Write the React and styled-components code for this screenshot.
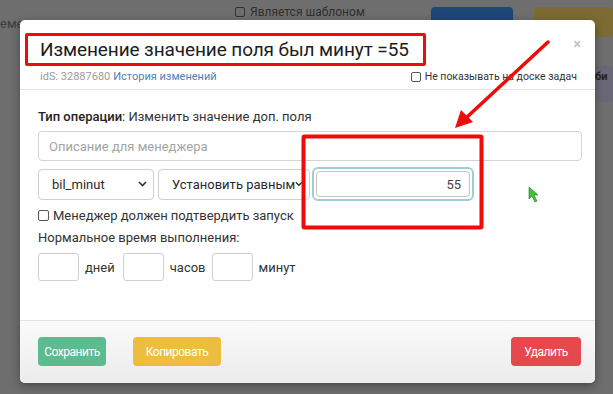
import React from 'react';
import styled, { createGlobalStyle } from 'styled-components';

const Global = createGlobalStyle`
  *, *::before, *::after { box-sizing: border-box; }
  html, body { margin: 0; padding: 0; }
  body {
    width: 613px;
    height: 394px;
    overflow: hidden;
    font-family: Roboto, "Noto Sans", sans-serif;
    background: #6c6c6c;
  }
`;

const Page = styled.div`
  position: relative;
  width: 613px;
  height: 394px;
  background: #6e6e6e;
  overflow: hidden;
`;

const TopBar = styled.div`
  display: flex;
  align-items: flex-start;
  height: 40px;
  color: #3a3a3a;
  font-size: 13px;
  white-space: nowrap;
`;

const BgText = styled.div`
  margin-top: 16px;
  width: 60px;
  color: #3c3c3c;
`;

const BgCheck = styled.label`
  display: flex;
  align-items: center;
  gap: 5px;
  margin: 5px 0 0 176px;
  color: #2e2e2e;
  font-size: 12px;
`;

const BgBox = styled.span`
  width: 10px;
  height: 10px;
  border: 1px solid #333;
  border-radius: 2px;
`;

const BgButton = styled.div`
  width: ${p => p.$w}px;
  height: 30px;
  margin: 7px 0 0 ${p => p.$ml}px;
  border-radius: 4px;
  background: ${p => p.$c};
`;

const SidePanel = styled.div`
  position: absolute;
  right: 0;
  top: 66px;
  width: 18px;
  height: 36px;
  background: #6a6876;
  color: #222;
  font-size: 11px;
  font-weight: 700;
  padding-top: 4px;
  overflow: hidden;
  white-space: nowrap;
`;

const Modal = styled.div`
  position: absolute;
  left: 20px;
  top: 20px;
  width: 575px;
  height: 363px;
  background: #fff;
  border-radius: 5px;
  box-shadow: 0 3px 10px rgba(0, 0, 0, 0.35);
  display: flex;
  flex-direction: column;
  overflow: hidden;
`;

const Header = styled.div`
  height: 70px;
  flex: none;
  border-bottom: 1px solid #e4e4e4;
  padding: 13px 18px 0 5px;
  display: flex;
  flex-direction: column;
  position: relative;
`;

const TitleBox = styled.div`
  align-self: flex-start;
  border: 3px solid #f00a0a;
  border-radius: 2px;
  padding: 0 14px 0 12px;
  height: 33px;
  display: flex;
  align-items: center;
  font-size: 19px;
  letter-spacing: -0.1px;
  color: #1c1c1c;
  white-space: nowrap;
`;

const SubRow = styled.div`
  display: flex;
  align-items: center;
  justify-content: space-between;
  margin-top: 4px;
  padding-left: 15px;
  font-size: 11px;
  white-space: nowrap;
`;

const Ids = styled.span`
  color: #9a9a9a;
  a { color: #4d7fb8; text-decoration: none; margin-left: 3px; }
`;

const CheckLabel = styled.label`
  display: flex;
  align-items: center;
  gap: 4px;
  color: ${p => p.$c || '#333'};
  font-size: ${p => p.$fs || 11}px;
  white-space: nowrap;
`;

const Box = styled.span`
  width: ${p => p.$s || 10}px;
  height: ${p => p.$s || 10}px;
  border: 1px solid #555;
  border-radius: 2px;
  background: #fff;
  flex: none;
`;

const Close = styled.span`
  position: absolute;
  right: 14px;
  top: 16px;
  color: #c4c4c4;
  font-size: 14px;
  font-weight: 700;
`;

const Body = styled.div`
  flex: 1;
  padding: 19px 13px 0 18px;
  display: flex;
  flex-direction: column;
  font-size: 13px;
  color: #333;
`;

const OpLine = styled.div`
  height: 15px;
  line-height: 15px;
  white-space: nowrap;
  b { font-weight: 500; color: #222; }
`;

const Input = styled.div`
  height: 30px;
  border: 1px solid #d4d4d4;
  border-radius: 4px;
  display: flex;
  align-items: center;
  padding: 0 10px;
  color: #a4a4a4;
  font-size: 13px;
  margin-top: 7px;
`;

const Row = styled.div`
  display: flex;
  align-items: center;
  margin-top: 6px;
`;

const Select = styled.div`
  width: ${p => p.$w}px;
  height: 31px;
  margin-right: ${p => p.$mr}px;
  border: 1px solid #cfcfcf;
  border-radius: 4px;
  display: flex;
  align-items: center;
  justify-content: space-between;
  padding: 0 6px 0 13px;
  color: #2a2a2a;
  font-size: 13px;
  white-space: nowrap;
  overflow: hidden;
  flex: none;
`;

const Focus = styled.div`
  width: 162px;
  height: 34px;
  border: 2px solid #9fcdd5;
  border-radius: 6px;
  padding: 2px;
  flex: none;
`;

const FocusInner = styled.div`
  height: 100%;
  border: 1px solid #c6c6c6;
  border-radius: 4px;
  display: flex;
  align-items: center;
  justify-content: flex-end;
  padding-right: 8px;
  font-size: 13px;
  color: #444;
`;

const Line = styled.div`
  margin-top: ${p => p.$mt}px;
  display: flex;
  align-items: center;
  white-space: nowrap;
`;

const TimeRow = styled.div`
  display: flex;
  align-items: center;
  margin-top: 8px;
`;

const TimeInput = styled.div`
  width: 41px;
  height: 28px;
  border: 1px solid #d0d0d0;
  border-radius: 3px;
  margin: 0 6px 0 ${p => p.$ml || 0}px;
`;

const Footer = styled.div`
  height: 63px;
  flex: none;
  border-top: 1px solid #e2e2e2;
  background: linear-gradient(#fafafa, #ececec);
  display: flex;
  align-items: flex-start;
  padding: 16px 14px 0 18px;
  gap: 27px;
`;

const Btn = styled.div`
  width: ${p => p.$w}px;
  height: 29px;
  border-radius: 4px;
  background: ${p => p.$bg};
  color: #fff;
  display: flex;
  align-items: center;
  justify-content: center;
  font-family: Roboto, "Liberation Sans", sans-serif;
  font-size: 12px;
  letter-spacing: -0.5px;
  white-space: nowrap;
  margin-left: ${p => (p.$right ? 'auto' : '0')};
`;

const Overlay = styled.svg`
  position: absolute;
  left: 0;
  top: 0;
  pointer-events: none;
`;

const Caret = () => (
  <svg width="9" height="6" viewBox="0 0 9 6">
    <path d="M1 1l3.5 3.5L8 1" fill="none" stroke="#333" strokeWidth="1.6" />
  </svg>
);

export default function App() {
  return (
    <Page>
      <Global />
      <TopBar>
        <BgText>емел</BgText>
        <BgCheck><BgBox />Является шаблоном</BgCheck>
        <BgButton $w={84} $ml={66} $c="#1e4677" />
        <BgButton $w={80} $ml={21} $c="#7c6b32" />
      </TopBar>
      <SidePanel>би</SidePanel>

      <Modal>
        <Header>
          <TitleBox>Изменение значение поля был минут =55</TitleBox>
          <SubRow>
            <Ids>idS: 32887680<a href="#">История изменений</a></Ids>
            <CheckLabel $fs={10.5} $c="#333"><Box $s={10} />Не показывать на доске задач</CheckLabel>
          </SubRow>
          <Close>×</Close>
        </Header>
        <Body>
          <OpLine><b>Тип операции</b>: Изменить значение доп. поля</OpLine>
          <Input>Описание для менеджера</Input>
          <Row>
            <Select $w={116} $mr={4}>bil_minut<Caret /></Select>
            <Select $w={152} $mr={2}>Установить равным<Caret /></Select>
            <Focus><FocusInner>55</FocusInner></Focus>
          </Row>
          <Line $mt={7}>
            <CheckLabel $fs={13} $c="#333"><Box $s={11} />Менеджер должен подтвердить запуск</CheckLabel>
          </Line>
          <Line $mt={7}>Нормальное время выполнения:</Line>
          <TimeRow>
            <TimeInput />
            <span>дней</span>
            <TimeInput $ml={8} />
            <span>часов</span>
            <TimeInput $ml={6} />
            <span>минут</span>
          </TimeRow>
        </Body>
        <Footer>
          <Btn $w={68} $bg="#5dbb90">Сохранить</Btn>
          <Btn $w={88} $bg="#ecbd3f">Копировать</Btn>
          <Btn $w={70} $bg="#e6484d" $right>Удалить</Btn>
        </Footer>
      </Modal>

      <Overlay width="613" height="394" viewBox="0 0 613 394">
        <rect x="303.5" y="136.5" width="178" height="91" fill="none" stroke="#f00a0a" strokeWidth="4" rx="1" />
        <line x1="548" y1="42" x2="466" y2="118" stroke="#f00a0a" strokeWidth="3.5" strokeLinecap="round" />
        <path d="M455 128 L461 110 L473 122 Z" fill="#f00a0a" />
        <path d="M529 187 L529 199 L532 196 L535 202 L537 201 L534 195 L538 195 Z" fill="#3fc33a" stroke="#1f7a1f" strokeWidth="0.6" />
      </Overlay>
    </Page>
  );
}
